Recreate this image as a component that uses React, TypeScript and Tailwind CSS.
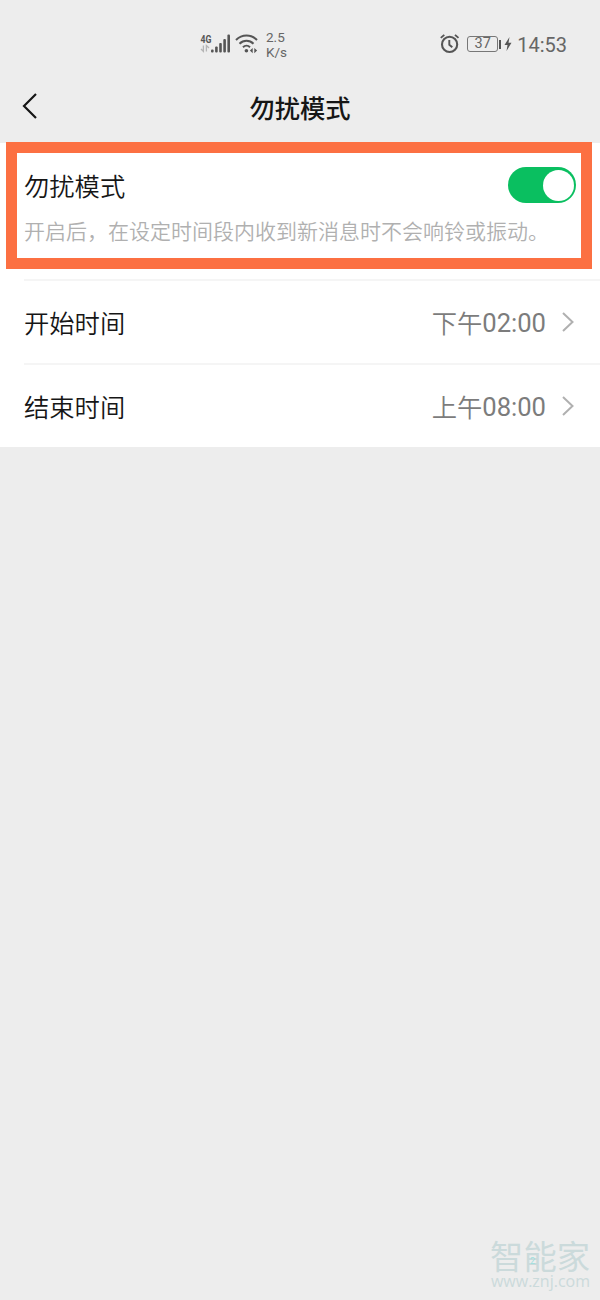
interface TimeRowProps {
  label: string
  value: string
}

function TimeRow({ label, value }: TimeRowProps) {
  return (
    <div className="ml-6 flex h-[84px] items-center border-t-2 border-[#f5f5f5] pr-[26px]">
      <div className="text-[25.3px] leading-9 font-[350] text-[#161616]">{label}</div>
      <div className="ml-auto flex items-center text-[#7c7c7c]">
        <span className="text-[25.3px] leading-9 font-[350]">{value.slice(0, 2)}</span>
        <span className="pt-0.5 font-[Roboto] text-[25.6px] leading-9">{value.slice(2)}</span>
      </div>
      <svg className="ml-4 h-5 w-3" viewBox="0 0 12 20" fill="none" stroke="#b0b0b0" strokeWidth="2">
        <path d="M1 1l9.5 9L1 19" />
      </svg>
    </div>
  )
}

function SignalIcon() {
  return (
    <svg className="h-6 w-8" viewBox="0 0 32 24" fill="#555">
      <text x="0.5" y="11" fontFamily="Roboto" fontSize="11" fontWeight="700" textLength="11" lengthAdjust="spacingAndGlyphs">4G</text>
      <path d="M3.4 13.5v6L1 17M6.4 19.5v-6L9 16" stroke="#b5b5b5" strokeWidth="1.3" fill="none" />
      <rect x="11" y="17.5" width="2.6" height="3" rx="1" />
      <rect x="15.1" y="14.5" width="2.6" height="6" rx="1" />
      <rect x="19.2" y="11" width="2.6" height="9.5" rx="1" />
      <rect x="23.3" y="7" width="2.6" height="13.5" rx="1" />
      <rect x="27.4" y="2.5" width="2.6" height="18" rx="1" />
    </svg>
  )
}

function WifiIcon() {
  return (
    <svg className="h-6 w-6" viewBox="0 0 24 24" fill="none" stroke="#555" strokeWidth="2">
      <path d="M1 8c6-6 15-6 21 0M4.5 11.7c4-4 10-4 14 0M8 15.3c2-2 5-2 7 0" />
      <circle cx="11.4" cy="18.7" r="1.8" fill="#555" stroke="none" />
      <path d="M17.7 16v5.2l-2.8-2.6zM19.3 16v5.2l2.8-2.6z" fill="#555" stroke="none" />
    </svg>
  )
}

function AlarmIcon() {
  return (
    <svg className="h-5 w-5" viewBox="0 0 20 20" fill="none" stroke="#555" strokeWidth="2.1">
      <circle cx="9.6" cy="10.4" r="7.6" />
      <path d="M9.3 6v4.7l3 2.6" strokeWidth="1.9" />
      <path d="M0.8 3.9L4.3 0.9M15 0.9l3.5 3" strokeWidth="1.9" />
    </svg>
  )
}

function StatusBar() {
  return (
    <div className="flex h-[72px] items-center pt-4 pr-[33px] pl-[200px] font-[Roboto] text-[#666]">
      <SignalIcon />
      <div className="ml-[3px]">
        <WifiIcon />
      </div>
      <div className="ml-[7px] pt-px text-[13.5px] leading-[15px]">
        <div>2.5</div>
        <div>K/s</div>
      </div>
      <div className="ml-auto flex items-center">
        <AlarmIcon />
        {/* Battery */}
        <div className="ml-[7px] flex h-4 w-[31px] items-center justify-center rounded-[3px] border border-[#777] pt-px text-[14.5px] leading-none">
          37
        </div>
        <div className="ml-px h-[9px] w-[2px] bg-[#555]" />
        <svg className="ml-[3px] h-4 w-2" viewBox="0 0 8 16" fill="#555">
          <path d="M5.5 1L0.5 9h3L2.5 15l5-8.3h-3z" />
        </svg>
        <span className="ml-[5px] pt-0.5 text-[20px] leading-6">14:53</span>
      </div>
    </div>
  )
}

function Watermark() {
  return (
    <div className="mt-auto flex flex-col items-end pr-[10px] pb-[10px] text-[#cbdadb]">
      <div className="relative text-[33.3px] leading-[34px] font-normal">
        智能家
        <span className="absolute top-[18px] left-[40px] font-[Roboto] text-[9px] leading-[10px] text-[#9fe0df]">2</span>
      </div>
      <div className="font-['Open_Sans'] text-[16px] leading-[18px]">www.znj.com</div>
    </div>
  )
}

export default function App() {
  return (
    <div className="relative flex h-[1300px] w-[600px] flex-col bg-[#ededed] font-['Noto_Sans_CJK_SC',sans-serif]">
      <StatusBar />

      {/* Title bar */}
      <div className="grid h-[71px] grid-cols-[1fr_auto_1fr] items-center">
        <svg className="mb-1 ml-[22px] h-[26px] w-4" viewBox="0 0 16 26" fill="none" stroke="#161616" strokeWidth="2.2">
          <path d="M14 1L2 13l12 12" />
        </svg>
        <h1 className="pb-0.5 text-[25.3px] leading-9 font-medium text-[#161616]">勿扰模式</h1>
      </div>

      <div className="bg-white">
        <div className="h-[136px] pt-6 pr-6 pl-6">
          <div className="flex h-9 items-center justify-between">
            <div className="text-[25.3px] leading-9 font-[350] text-[#161616]">勿扰模式</div>
            <div className="flex h-9 w-[68px] items-center justify-end rounded-full bg-[#0abf60] pr-[2px]">
              <div className="h-[31px] w-[31px] rounded-full bg-white" />
            </div>
          </div>
          <p className="mt-[11px] text-[21px] leading-8 font-[350] whitespace-nowrap text-[#b0b0b0]">
            开启后，在设定时间段内收到新消息时不会响铃或振动。
          </p>
        </div>
        <TimeRow label="开始时间" value="下午02:00" />
        <TimeRow label="结束时间" value="上午08:00" />
      </div>

      <Watermark />

      {/* Highlight frame over the switch section */}
      <div className="absolute top-[142px] left-[6px] h-[127px] w-[586px] border-[11px] border-[#fc7042]" />
    </div>
  )
}
